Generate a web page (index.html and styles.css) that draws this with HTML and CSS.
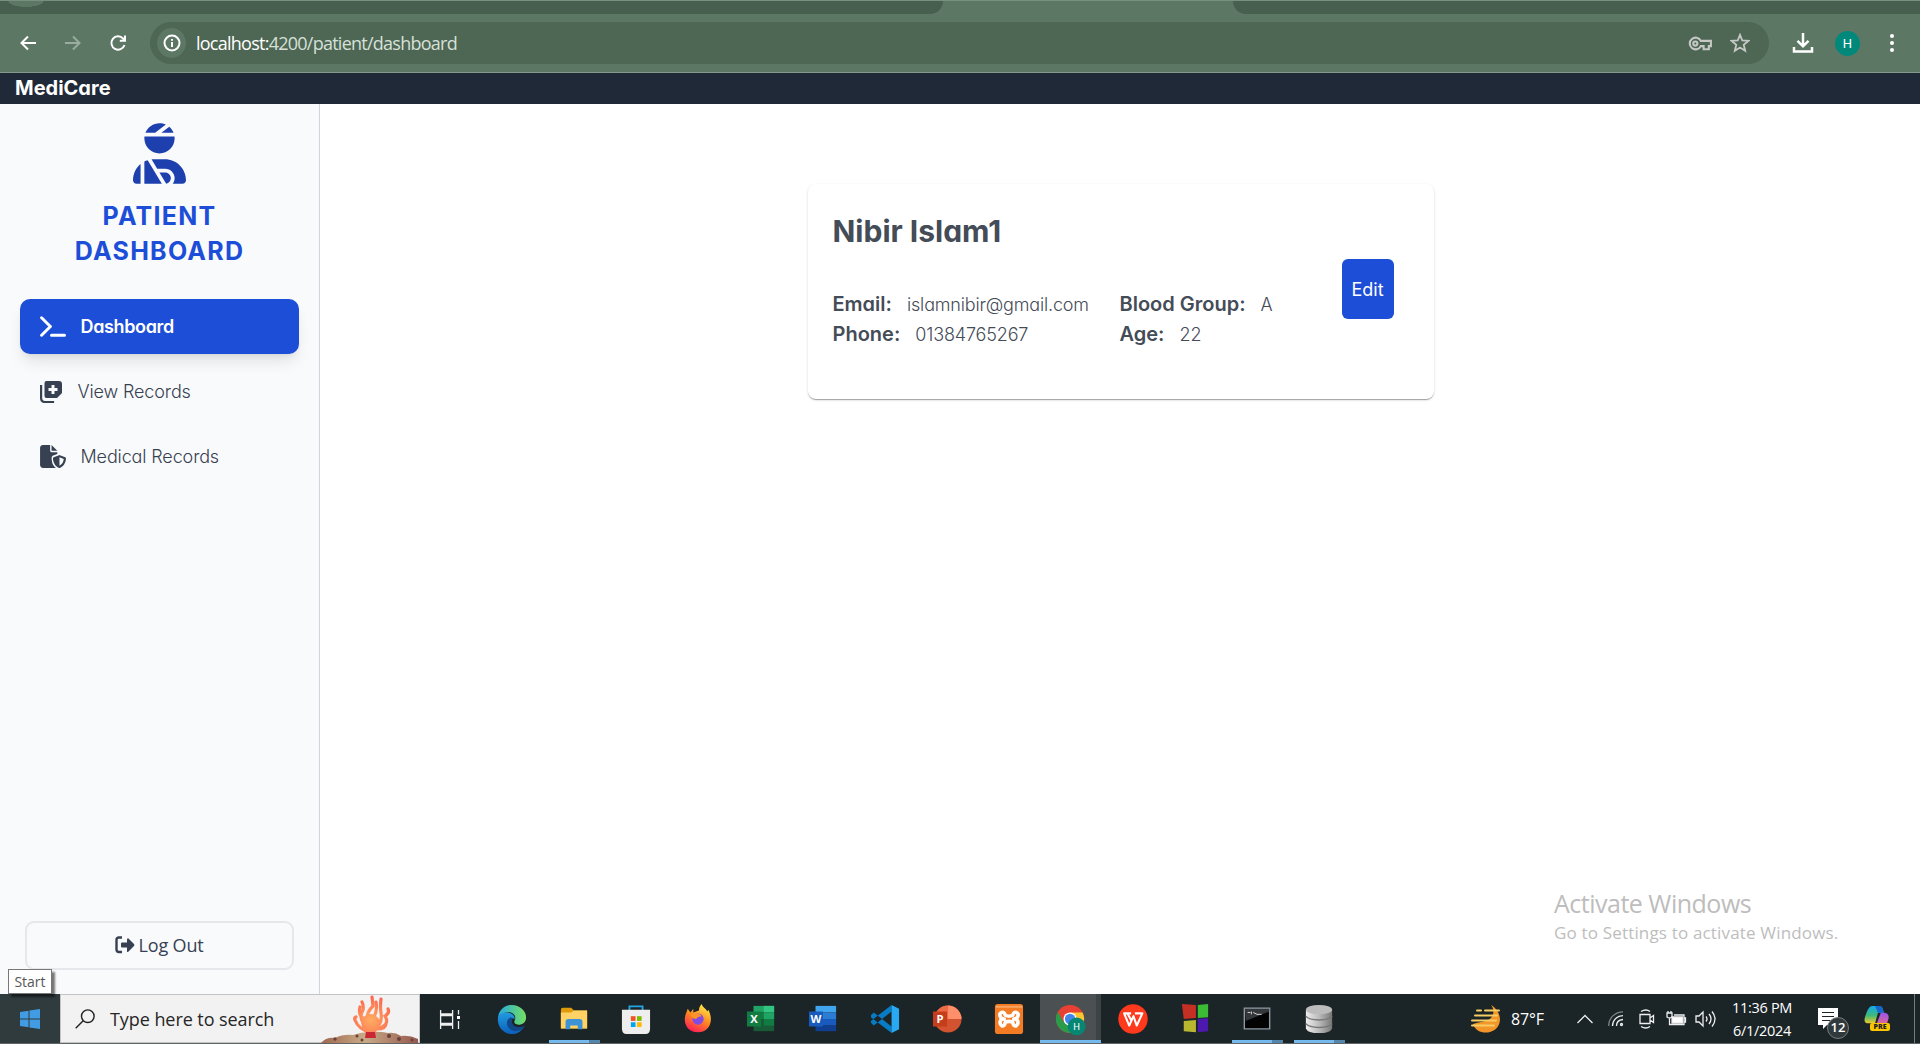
FILE: index.html
```html
<!DOCTYPE html>
<html lang="en">
<head>
<meta charset="utf-8">
<title>MediCare</title>
<link rel="stylesheet" href="styles.css">
</head>
<body>
<div class="screen">
  <header class="browser">
    <div class="tabstrip"><i class="tab-left"></i><i class="tab-right"></i></div>
    <div class="toolbar">
      <svg class="nav" viewBox="0 0 20 20"><path d="M18 10H4M10 3.5L3.5 10l6.500 6.500"/></svg>
      <svg class="nav dim" viewBox="0 0 20 20"><path d="M2 10h14M10 3.500l6.500 6.500-6.500 6.500"/></svg>
      <svg class="nav" viewBox="0 0 20 20"><path d="M16.500 12a6.700 6.700 0 1 1-1.400-6.500L17 7.500M17 2.500v5.200h-5.200"/></svg>
      <div class="address">
        <span class="info"><svg viewBox="0 0 20 20"><circle cx="10" cy="10" r="7.500"/><path d="M10 9v5M10 6v1.800"/></svg></span>
        <span class="url"><b>localhost:</b>4200/patient/dashboard</span>
        <svg class="key" viewBox="0 0 24 16"><path d="M12.300 5.500A5.600 5.600 0 1 0 12.300 10.500H15v3h5v-3h2v-5z"/><circle cx="7" cy="8" r="2"/></svg>
        <svg class="star" viewBox="0 0 20 20"><path d="M10 1.800l2.300 5.700 6 .4-4.600 3.900 1.500 6-5.200-3.300-5.200 3.300 1.500-6L1.700 7.900l6-.4z"/></svg>
      </div>
      <svg class="download" viewBox="0 0 22 22"><path d="M11 1v13M5.500 8.800L11 14.300l5.500-5.500M2 15v4.500h18V15"/></svg>
      <span class="avatar">H</span>
      <svg class="dots" viewBox="0 0 6 20"><circle cx="3" cy="3" r="2"/><circle cx="3" cy="10" r="2"/><circle cx="3" cy="17" r="2"/></svg>
    </div>
  </header>
  <div class="appbar">MediCare</div>
  <div class="app">
    <aside class="sidebar">
      <svg class="patient" viewBox="0 0 448 512"><path d="M240 80H342.700c-7.900-19.500-20.400-36.500-36.200-49.900L240 80zm37.700-68.200C261.300 4.200 243.200 0 224 0c-53.700 0-99.700 33.100-118.700 80h81.400l91-68.200zM224 256c70.700 0 128-57.300 128-128c0-5.400-.3-10.800-1-16H97c-.7 5.200-1 10.600-1 16c0 70.700 57.300 128 128 128zM124 312.400c-9.700 3.100-19.100 7-28 11.700V512H243.700L181.500 408.100 124 312.400zm33-7.200L204.300 384H272c44.200 0 80 35.800 80 80c0 18-6 34.600-16 48h82.300c16.400 0 29.700-13.300 29.700-29.700C448 383.800 368.200 304 269.700 304H178.300c-7.200 0-14.300.4-21.300 1.300zM0 482.300C0 498.700 13.300 512 29.700 512H64V345.400C24.900 378.100 0 427.300 0 482.300zM320 464c0-26.500-21.500-48-48-48H223.500l57.100 95.200C303 507.200 320 487.600 320 464z"/></svg>
      <h1 class="title">PATIENT<br>DASHBOARD</h1>
      <nav class="menu">
        <a class="item active"><svg class="wide" viewBox="0 0 26 22"><path d="M1.600 2.300L10.400 11 1.600 19.700M11.500 19.700h13"/></svg><span class="t-dash">Dashboard</span></a>
        <a class="item"><svg class="square" viewBox="0 0 22 22"><path d="M6.500 0H19q3 0 3 3v9l-5 5H6.500q-2 0-2-2V2q0-2 2-2zM11.500 4v3h-3v3h3v3h3v-3h3V7h-3V4z" fill-rule="evenodd"/><path class="line" d="M1.100 4v13q0 4 4 4h9"/></svg><span>View Records</span></a>
        <a class="item"><svg class="wide" viewBox="0 0 576 512"><path d="M0 64C0 28.700 28.700 0 64 0H224V128c0 17.700 14.300 32 32 32H384v38.600l-91 36.300c-21 8.400-35 28-35 52.600 0 76 20 171 94 218-10 4-20 6-32 6H64c-35.300 0-64-28.700-64-64V64zm384 64H256V0L384 128zm39.100 97.700c5.700-2.300 12.100-2.300 17.800 0l120 48C570 277.400 576 286.200 576 296c0 63.300-25.900 168.800-134.800 214.200c-5.900 2.500-12.600 2.500-18.500 0C313.900 464.800 288 359.300 288 296c0-9.800 6-18.600 15.100-22.300l120-48zM527.400 312L432 273.800V461.700c68.200-33 91.500-99 95.400-149.700z"/></svg><span>Medical Records</span></a>
      </nav>
      <button class="logout"><svg viewBox="0 0 20 18"><path class="bracket" d="M7 1.500H4q-2.500 0-2.500 2.500v9.500Q1.500 16 4 16h3"/><path d="M12 2.500v4H7q-1 0-1 1v3q0 1 1 1h5v4q.5 1 1.500 0l5.500-5.500q.8-1 0-2l-5.500-5.500q-1-.6-1.500 1z"/></svg><span>Log Out</span></button>
    </aside>
    <main class="content">
      <section class="card">
        <div class="details">
          <h2>Nibir Islam1</h2>
          <div class="facts">
            <p><b>Email:</b><span class="v-email">islamnibir@gmail.com</span></p>
            <p><b>Blood Group:</b><span>A</span></p>
            <p><b>Phone:</b><span class="v-phone">01384765267</span></p>
            <p><b>Age:</b><span>22</span></p>
          </div>
        </div>
        <button class="edit">Edit</button>
      </section>
    </main>
  </div>
  <footer class="taskbar">
    <div class="start"><svg viewBox="0 0 20 20"><path d="M0 3l8.500-1.300v7.800H0zM9.500 1.500L20 0v9.500H9.500zM0 10.500h8.500v7.800L0 17zM9.500 10.500H20V20L9.500 18.500z"/></svg></div>
    <div class="search">
      <svg class="lens" viewBox="0 0 20 20"><circle cx="12.800" cy="7.200" r="6.300"/><path d="M8.200 11.800L.7 19.300"/></svg>
      <span>Type here to search</span>
      <svg class="coral" viewBox="0 0 98 49">
        <defs>
          <radialGradient id="coral" gradientUnits="userSpaceOnUse" cx="50" cy="26" r="24"><stop offset="0" stop-color="#ffad62"/><stop offset="1" stop-color="#fb6650"/></radialGradient>
          <linearGradient id="rock"><stop offset="0" stop-color="#a0674f"/><stop offset=".45" stop-color="#c8ab86"/><stop offset="1" stop-color="#96584e"/></linearGradient>
        </defs>
        <path d="M0 49q5-6 14-5 8-4 18-3 8-3 17-3 9-1 18 1 7-1 13 3 9-1 17 3v4z" fill="url(#rock)"/>
        <g class="branches"><path d="M49 38Q38 36 34 26M34 26q-1-2 1-3M48 34Q36 26 42 16q1-4-1-8M47 28q-3-8 5-16l-1-9M52 35Q62 31 60 19q-1-6 0-14M54 35Q70 32 64 22q5-3 3-7M42 24q-5-3-3-11M51 26q6-8 4-18M57 35q7 0 8-5"/></g>
        <path d="M40 26q9-12 19 0 0 8-5 13h-9q-5-4-5-13z" fill="url(#coral)"/><path d="M45 38h9l1 6H44z" fill="#c92734"/>
        <g fill="#68413c"><circle cx="14" cy="45" r="1.700"/><circle cx="36" cy="42" r="1.500"/><circle cx="41" cy="46" r="1.500"/><circle cx="68" cy="42" r="2"/><circle cx="78" cy="45" r="2"/><circle cx="91" cy="46" r="1.500"/></g>
      </svg>
    </div>
    <div class="apps">
      <div class="app-slot view"><svg viewBox="0 0 32 32"><g fill="none" stroke="#eee" stroke-width="1.300"><path d="M6.600 7v4h12V7M6.600 26v-4h12v4M6.600 12.500h12v8h-12zM24.500 7v4.500M24.500 18v8"/></g><path d="M23 13h3v3h-3z" fill="#fff"/></svg></div>
      <div class="app-slot"><svg viewBox="0 0 32 32"><defs><linearGradient id="edge1" x2="1"><stop stop-color="#25a8e0"/><stop offset="1" stop-color="#73e060"/></linearGradient><linearGradient id="edge2" y2="1" x2="0"><stop stop-color="#229bdf"/><stop offset="1" stop-color="#0a60bd"/></linearGradient></defs><path d="M1 15C2 6 8 1 16 1s15 6 15 13c0 6-4 8-8 8-5 0-5-3-4-5 2-4-2-9-8-8-5 0-9 3-10 6z" fill="url(#edge1)"/><path d="M1 15c0-4 5-6 9-6 5 0 9 3 9 7-4-2-8 0-8 4 0 6 8 9 17 5-3 5-7 7-12 7C8 32 0 25 1 15z" fill="url(#edge2)"/><path d="M15 14c-5 2-6 9-1 13 5 4 13 2 16-4-5 3-14 2-14-4 0-2 1-3-1-5z" fill="#124887"/></svg></div>
      <div class="app-slot running"><svg viewBox="0 0 32 32"><path d="M2 6q0-2 2-2h9l3 3h14v19H2z" fill="#e09b0a"/><path d="M2 9h11l3-2h14v19H2z" fill="#fed264"/><path d="M7 27V19q0-3 3-3h12q3 0 3 3v8h-5v-4h-8v4z" fill="#3d93d6"/></svg></div>
      <div class="app-slot"><svg viewBox="0 0 32 32"><path d="M9 8V2.500h14V8" fill="none" stroke="#20a5e5" stroke-width="2"/><path d="M1 6h30v20q0 6-5 6H6q-5 0-5-6z" fill="#eee"/><path d="M10.500 13h5v5h-5z" fill="#f25022"/><path d="M17 13h5v5h-5z" fill="#7fba00"/><path d="M10.500 19.500h5v5h-5z" fill="#00a4ef"/><path d="M17 19.500h5v5h-5z" fill="#ffb900"/></svg></div>
      <div class="app-slot"><svg viewBox="0 0 32 32"><defs><linearGradient id="fox" x1=".8" y1="0" x2=".3" y2="1"><stop stop-color="#fff44f"/><stop offset=".5" stop-color="#ff8a20"/><stop offset="1" stop-color="#ff1d58"/></linearGradient></defs><path d="M4 8l1-3 3 4 3-4v4l6-2c0-3 1-5 3-7 1 4 4 4 6 8l1-2c6 11 2 24-11 24C3 30-1 18 4 8z" fill="url(#fox)"/><circle cx="16" cy="16" r="6" fill="#824be6"/><path d="M8 11l8-1q3 1 4 3-4 0-6 3-5 0-6-5z" fill="#ff9227"/></svg></div>
      <div class="app-slot office"><svg viewBox="0 0 32 32"><path d="M8 2h22v7H8z" fill="#21a366"/><path d="M19 2h11v7H19z" fill="#33c481"/><path d="M8 9h22v7H8z" fill="#107c41"/><path d="M19 9h11v7H19z" fill="#21a366"/><path d="M8 16h22v13H8z" fill="#185c37"/><path d="M19 16h11v7H19z" fill="#107c41"/><path d="M1 8h15v16H1z" fill="#107c41"/><text x="8.500" y="20">X</text></svg></div>
      <div class="app-slot office"><svg viewBox="0 0 32 32"><path d="M8 2h22v7H8z" fill="#41a5ee"/><path d="M8 9h22v7H8z" fill="#2b7cd3"/><path d="M8 16h22v7H8z" fill="#185abd"/><path d="M8 23h22v6H8z" fill="#103f91"/><path d="M1 8h15v16H1z" fill="#185abd"/><text x="8.500" y="20">W</text></svg></div>
      <div class="app-slot"><svg viewBox="0 0 32 32"><path d="M1 12l3-3 19 15v7L1 14zM1 20l3 3L23 8V1L1 18z" fill="#087bc5"/><path d="M23 1l8 4v22l-8 4z" fill="#28a9f2"/></svg></div>
      <div class="app-slot office"><svg viewBox="0 0 32 32"><circle cx="17" cy="16" r="14.500" fill="#d35230"/><path d="M17 1.500A14.500 14.500 0 0 1 31.500 16H17z" fill="#ff8f6b"/><path d="M17 1.500A14.500 14.500 0 0 0 2.500 16H17z" fill="#ed6c47"/><path d="M1 8h15v16H1z" fill="#c43e1c"/><text x="8.500" y="20">P</text></svg></div>
      <div class="app-slot"><svg viewBox="0 0 32 32"><rect x="1" y="0" width="30" height="32" rx="3" fill="#f27b24"/><path d="M2 2h28v2H2z" fill="#f8a464"/><path d="M12 12Q11 8 8 9t-1 5q1 2 4 2-4 0-4.500 3t2 4.500q3 0 3.500-4 4-2 8 0 .500 4 3.500 4 2.500-1.500 2-4.500T21 16q3 0 4-2 2-4-1-5t-4 3q-4 2-8 0z" fill="none" stroke="#fff" stroke-width="3.800" stroke-linejoin="round"/></svg></div>
      <div class="app-slot current"><svg viewBox="0 0 32 32"><circle cx="15" cy="16" r="15" fill="#e84134"/><path d="M2 8.500A15 15 0 0 0 15 31l6-11-13-1z" fill="#299b49"/><path d="M15 9h13.300A15 15 0 0 1 15 31l7-12z" fill="#fbc52d"/><circle cx="15" cy="16" r="7" fill="#fff"/><circle cx="15" cy="16" r="5.500" fill="#4186e8"/><circle cx="22" cy="24" r="9.500" fill="#078673"/><text x="22" y="28" class="profile">H</text></svg></div>
      <div class="app-slot"><svg viewBox="0 0 32 32"><circle cx="16" cy="16" r="15.700" fill="#ff391b"/><path d="M14 10H6.500l5.500 13 4.500-10 3.500 10L26 10h-8M10 10l4 7" fill="none" stroke="#fff" stroke-width="2.200" stroke-linejoin="round"/></svg></div>
      <div class="app-slot"><svg viewBox="0 0 32 32"><path d="M2 0l15 1v14L4 16z" fill="#c62f24"/><path d="M19 1l11-1v14l-11 1z" fill="#3cbb35"/><path d="M4 18l13-1v13L4 29z" fill="#b9b62f"/><path d="M19 16l11-1v14l-11 1z" fill="#4c18ad"/></svg></div>
      <div class="app-slot running"><svg viewBox="0 0 32 32"><path d="M2.500 4.500h27v22h-27z" fill="#030303" stroke="#8d98a3" stroke-width="1.500"/><path d="M3 5h26v3L4 18z" fill="#35383b"/><path d="M6 9h3M10 8v3M12 9l4 2h5" stroke="#ddd" fill="none"/></svg></div>
      <div class="app-slot running"><svg viewBox="0 0 32 32"><defs><linearGradient id="disk"><stop stop-color="#eee"/><stop offset=".5" stop-color="#bbb"/><stop offset="1" stop-color="#777"/></linearGradient></defs><path d="M2 6v20q2 5 14 5t14-5V6z" fill="url(#disk)"/><ellipse cx="16" cy="6" rx="14" ry="5" fill="#bcbcbc"/><path d="M2 13q3 4 14 4t14-4M2 21q3 4 14 4t14-4" fill="none" stroke="#777" stroke-width="1.500"/></svg></div>
    </div>
    <div class="tray">
      <svg class="moon" viewBox="0 0 30 30"><path d="M20 1c4 5 3 12-3 15-4 2-9 2-15 4 4 13 26 11 27-4 0-7-4-12-9-15z" fill="#f29629"/><path d="M6 6.500h4M14 6.500h14M4 11.500h22M1 16.500h24M1 21.500h22" stroke="#f6ce64" stroke-width="2" stroke-linecap="round"/></svg>
      <span class="temp">87°F</span>
      <svg class="chevron" viewBox="0 0 16 10"><path d="M.5 9L8 1.500 15.500 9"/></svg>
      <svg class="wifi" viewBox="0 0 16 16"><path class="faint" d="M.7 15C.7 7 7 .8 15 .8"/><path d="M4.500 15C4.500 9 9 4.700 15 4.700M8.500 15q0-6 6.500-6.500"/><circle cx="13.500" cy="13.500" r="1"/></svg>
      <svg class="camera" viewBox="0 0 16 18"><path d="M1 4.500h10v9H1zM11 8l3.500-2.500v7L11 10M2 1.500q5-3 9 0M2 16.500q5 3 9 0"/></svg>
      <svg class="battery" viewBox="0 0 20 16"><path d="M1 2v4q2.500 2 5 0V2zM2 0v2M5 0v2M3.500 7v6.500H18V4H8M18 7h1.500v4H18"/><path d="M6 6h10.500v6H6z" class="solid"/></svg>
      <svg class="speaker" viewBox="0 0 22 18"><path d="M1 6h3l4-4v14l-4-4H1zM11 6.500q2 2.500 0 5M14 4q4 5 0 10M17 1.500q6 7.500 0 15"/></svg>
      <div class="clock"><span>11:36 PM</span><span>6/1/2024</span></div>
      <div class="notice"><svg viewBox="0 0 20 21"><path d="M0 0h20v17H9l-4 4v-4H0z" fill="#fff"/><path d="M4 4.500h12M4 8.500h12M4 12.500h8" stroke="#1b2426" stroke-width="1.200"/></svg><b>12</b></div>
      <div class="copilot"><svg viewBox="0 0 26 26"><defs><linearGradient id="co1" x2="0" y2="1"><stop stop-color="#13a9ed"/><stop offset=".55" stop-color="#3fba78"/><stop offset="1" stop-color="#f2ca29"/></linearGradient><linearGradient id="co2" x2="0" y2="1"><stop stop-color="#9c55ef"/><stop offset="1" stop-color="#f66b72"/></linearGradient></defs><path d="M8 0h8q3 0 4 7h-6l-3 11H4q-6 0-3-8Q4 0 8 0z" fill="url(#co1)"/><path d="M11 0h5q3 0 4 7h-6Z" fill="#1766cd"/><path d="M17 7h4q5 1 4 6-2 8-5 10h-9z" fill="url(#co2)"/></svg><b>PRE</b></div>
      <i class="peek"></i>
    </div>
  </footer>
  <div class="tooltip">Start</div>
  <div class="watermark"><strong>Activate Windows</strong><span>Go to Settings to activate Windows.</span></div>
</div>
</body>
</html>
```
FILE: styles.css
```css
* { box-sizing: border-box; }
body { margin: 0; background: #fff; color: #374151; font-family: Inter, "Liberation Sans", sans-serif; font-feature-settings: "cv11" 1; }
svg { display: block; flex: none; }
h1, h2, p { margin: 0; }
button { font: inherit; font-feature-settings: inherit; color: inherit; }
.screen { position: relative; width: 1920px; height: 1044px; overflow: hidden; display: flex; flex-direction: column; }
.browser { height: 73px; background: #5c7764; border-top: 1px solid #789080; border-bottom: 1px solid #829b8a; flex: none; }
.tabstrip { display: flex; justify-content: space-between; height: 13px; }
.tab-left { width: 943px; background: radial-gradient(ellipse 18px 6px at 26px 0, #5c7764 95%, #475f4e); border-radius: 0 0 14px 0; }
.tab-right { width: 687px; background: #475f4e; border-radius: 0 0 0 14px; }
.toolbar { height: 58px; display: flex; align-items: center; padding: 0 20px 0 18px; }
.nav { width: 20px; height: 20px; margin-right: 25px; fill: none; stroke: #fff; stroke-width: 2; }
.nav.dim { stroke: #9aac9f; }
.nav:nth-child(3) { margin-right: 22px; }
.address { width: 1619px; height: 42px; border-radius: 21px; background: #4e6654; display: flex; align-items: center; padding: 0 19px 0 7px; }
.info { width: 29px; height: 30px; border-radius: 50%; background: #5c7764; display: grid; place-items: center; }
.info svg { width: 20px; height: 20px; fill: none; stroke: #fff; stroke-width: 2; }
.url { flex: 1; margin-left: 10px; font: 18px "Open Sans", sans-serif; letter-spacing: -.75px; color: #d6e0d8; }
.url b { color: #fff; font-weight: 400; }
.key { width: 25px; height: 17px; fill: none; stroke: #c5c8c5; stroke-width: 2; margin-right: 17px; }
.star { width: 20px; height: 20px; fill: none; stroke: #c5c8c5; stroke-width: 1.8; }
.download { width: 22px; height: 22px; fill: none; stroke: #fff; stroke-width: 2.5; margin-left: 23px; }
.avatar { width: 25px; height: 25px; border-radius: 50%; background: #00897b; color: #fff; font: 13px/25px Roboto, sans-serif; text-align: center; margin-left: 21px; }
.dots { width: 6px; height: 20px; fill: #fff; margin-left: auto; margin-right: 5px; }
.appbar { height: 31px; background: #1f2937; color: #fff; font-size: 20px; font-weight: 700; line-height: 31px; padding-left: 15px; flex: none; }
.app { flex: 1; display: flex; min-height: 0; }
.sidebar { width: 320px; background: #f9fafc; border-right: 1px solid #d1d5db; display: flex; flex-direction: column; align-items: center; padding: 19px 20px 24px; }
.patient { width: 53px; height: 61px; fill: #1e40af; }
.title { margin-top: 15px; color: #1d4ed8; font-size: 25px; font-weight: 700; line-height: 35px; letter-spacing: 1.25px; text-align: center; }
.menu { margin-top: 30px; width: 279px; display: flex; flex-direction: column; gap: 10px; }
.item { display: flex; align-items: center; height: 55px; padding: 0 20px; border-radius: 10px; font-size: 18px; font-weight: 300; letter-spacing: -.13px; }
.item svg { fill: #374151; }
.wide { width: 26px; height: 23px; margin-right: 14.5px; }
.square { width: 22px; height: 22px; margin-right: 15.5px; }
.line { fill: none; stroke: #374151; stroke-width: 2.2; }
.item.active { background: #1d4ed8; color: #fff; font-weight: 600; box-shadow: 0 10px 15px -3px #0000001a, 0 4px 6px -4px #0000001a; }
.item.active svg { fill: none; stroke: #fff; stroke-width: 3; stroke-linecap: round; stroke-linejoin: round; }
.t-dash { letter-spacing: -.35px; }
.logout { margin-top: auto; width: 269px; height: 49px; border: 2px solid #e5e7eb; border-radius: 9px; background: none; display: flex; align-items: center; justify-content: center; gap: 3px; padding: 0 0 1px; font: 18px "Open Sans", sans-serif; letter-spacing: -.15px; }
.logout svg { width: 20px; height: 18px; fill: #374151; }
.logout .bracket { fill: none; stroke: #374151; stroke-width: 2.4; }
.content { flex: 1; display: flex; justify-content: center; align-items: flex-start; padding: 80px 0 0 1px; }
.card { width: 626px; height: 215px; border-radius: 8px; background: #fff; box-shadow: 0 2px 1px -1px #0003, 0 1px 1px #00000024, 0 1px 3px #0000001f; display: flex; align-items: flex-start; padding: 27px 40px 0 25px; color: #444c57; }
.details { flex: 1; }
.card h2 { font-size: 30px; line-height: 40px; }
.facts { margin-top: 38px; display: grid; grid-template-columns: 287px 190px; grid-auto-rows: 30px; }
.facts p { display: flex; align-items: baseline; gap: 15px; font-size: 18px; line-height: 30px; font-weight: 300; white-space: nowrap; }
.facts b { font-size: 20px; font-weight: 600; }
.v-email { letter-spacing: -.17px; }
.v-phone { letter-spacing: -.15px; }
.edit { margin-top: 48px; width: 52px; height: 60px; border: 0; border-radius: 6px; background: #1d4ed8; color: #fff; font-size: 18px; padding: 0; }
.taskbar { position: relative; height: 50px; flex: none; display: flex; background: #1b2426; border-bottom: 1px solid #606668; color: #fff; font-family: "Open Sans", sans-serif; }
.start { width: 60px; background: #303b3d; display: grid; place-items: center; }
.start svg { width: 20px; height: 20px; fill: #429ce3; }
.search { width: 360px; background: #f2f2f2; border: 1px solid #c4c4c4; display: flex; align-items: center; padding-left: 14px; color: #262626; font-size: 18px; letter-spacing: -.07px; }
.lens { width: 20px; height: 20px; fill: none; stroke: #222; stroke-width: 1.4; margin-right: 15px; }
.coral { width: 98px; height: 49px; margin-left: auto; }
.branches path { fill: none; stroke: url(#coral); stroke-width: 3.2; stroke-linecap: round; }
.apps { display: flex; margin-left: -1px; }
.app-slot { width: 62.1px; display: grid; place-items: center; position: relative; }
.app-slot svg { width: 30px; height: 32px; }
.view svg { width: 32px; }
.running::after, .current::after { content: ""; position: absolute; bottom: 0; left: 6px; width: 51px; height: 3px; background: linear-gradient(90deg, #76b9ed 78%, #5486ac 78%); }
.current::before { content: ""; position: absolute; inset: 0 1px 0 0; background: #4b5152; border-right: 5px solid #3d4344; }
.current svg { position: relative; }
.current::after { left: 0; width: 61px; background: #76b9ed; }
.office text { fill: #fff; font: 700 12px "Open Sans", sans-serif; text-anchor: middle; }
.profile { fill: #fff; font: 10px Roboto, sans-serif; text-anchor: middle; }
.tray { margin-left: auto; width: 449px; display: flex; align-items: center; }
.moon { width: 30px; height: 30px; }
.temp { width: 37px; margin-left: 10px; font-size: 16px; letter-spacing: -.1px; }
.tray svg { overflow: visible; }
.chevron { width: 16px; height: 10px; margin-left: 29px; }
.wifi { width: 16px; height: 16px; margin-left: 15px; }
.faint { stroke: #7d8688; }
.camera { width: 16px; height: 18px; margin-left: 15px; }
.battery { width: 20px; height: 16px; margin-left: 11px; }
.speaker { width: 22px; height: 18px; margin-left: 9px; }
.chevron, .wifi, .camera, .battery, .speaker { fill: none; stroke: #eee; stroke-width: 1.3; }
.solid { fill: #fff; }
.clock { width: 62px; margin-left: 14px; font-size: 14.500px; line-height: 23px; display: flex; flex-direction: column; align-items: center; letter-spacing: -.3px; white-space: nowrap; }
.notice { position: relative; width: 31px; height: 32px; margin-left: 25px; }
.notice svg { width: 20px; height: 21px; margin-top: 5px; }
.notice b { position: absolute; left: 9px; top: 14px; width: 22px; height: 22px; border: 1px solid #777d80; border-radius: 50%; background: #31393c; font: 600 13px/19px "Open Sans", sans-serif; text-align: center; }
.copilot { position: relative; width: 26px; height: 26px; margin-left: 15px; }
.copilot svg { width: 26px; height: 25px; }
.copilot b { position: absolute; left: 6px; top: 17px; width: 20px; height: 8px; border-radius: 2px; background: #fbc500; color: #222; font: 800 7px/8px "Open Sans", sans-serif; text-align: center; }
.peek { width: 1px; height: 49px; background: #747b7d; margin-left: auto; margin-right: 5px; }
.tooltip { position: absolute; left: 8px; top: 969px; width: 44px; height: 25px; border: 1px solid #777; background: #fff; box-shadow: 3px 3px 2px #0008; color: #575757; font: 14px/23px "Open Sans", sans-serif; text-align: center; }
.watermark { position: absolute; left: 1554px; top: 886px; display: flex; flex-direction: column; color: #bdbdbd; font-family: "Open Sans", sans-serif; white-space: nowrap; }
.watermark strong { font-size: 25px; font-weight: 400; line-height: 34px; letter-spacing: -.5px; }
.watermark span { font-size: 17px; line-height: 26px; letter-spacing: .17px; }
```
